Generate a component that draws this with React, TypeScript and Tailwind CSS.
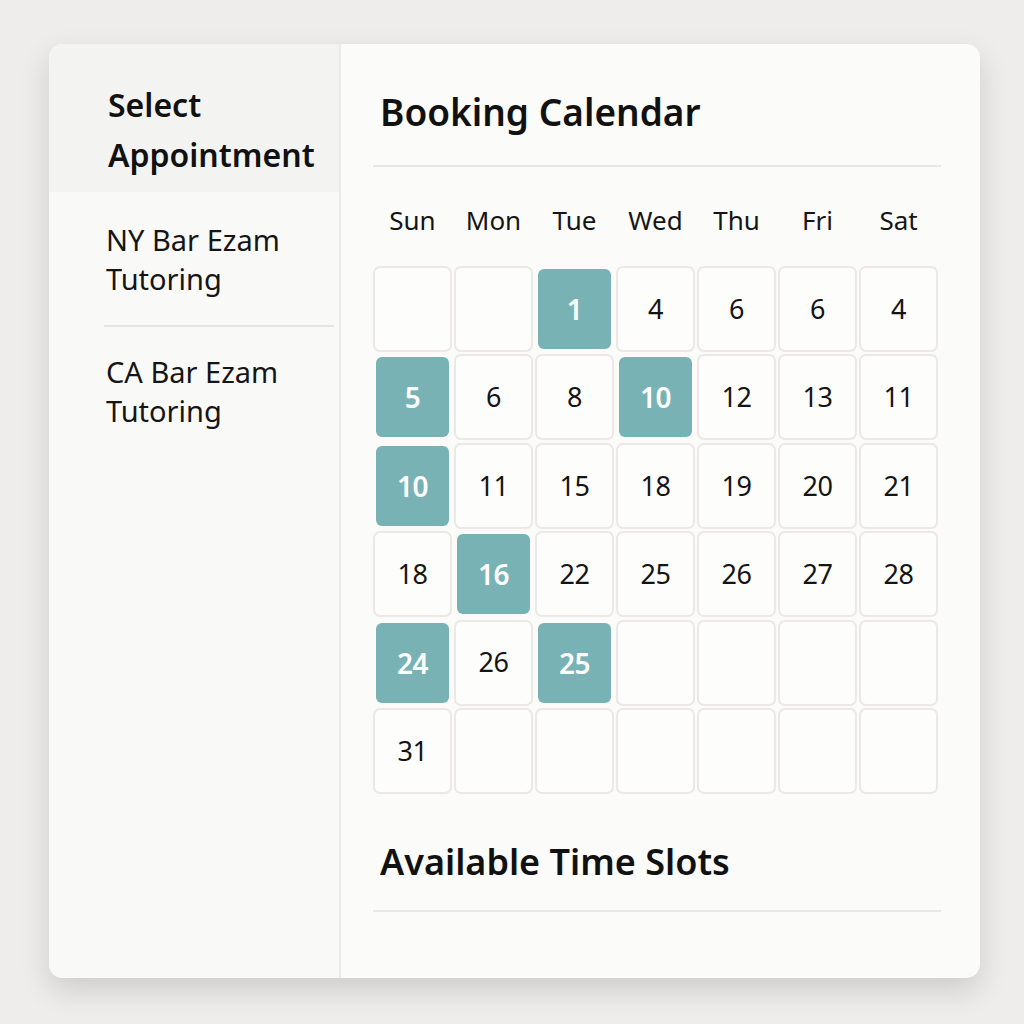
const DAYS = ['Sun', 'Mon', 'Tue', 'Wed', 'Thu', 'Fri', 'Sat']

type Cell = { n?: number; on?: boolean }

const WEEKS: Cell[][] = [
  [{}, {}, { n: 1, on: true }, { n: 4 }, { n: 6 }, { n: 6 }, { n: 4 }],
  [{ n: 5, on: true }, { n: 6 }, { n: 8 }, { n: 10, on: true }, { n: 12 }, { n: 13 }, { n: 11 }],
  [{ n: 10, on: true }, { n: 11 }, { n: 15 }, { n: 18 }, { n: 19 }, { n: 20 }, { n: 21 }],
  [{ n: 18 }, { n: 16, on: true }, { n: 22 }, { n: 25 }, { n: 26 }, { n: 27 }, { n: 28 }],
  [{ n: 24, on: true }, { n: 26 }, { n: 25, on: true }, {}, {}, {}, {}],
  [{ n: 31 }, {}, {}, {}, {}, {}, {}],
]

function DayCell({ cell }: { cell: Cell }) {
  if (cell.on) {
    return (
      <div className="h-[86px] p-[3px]">
        <div className="flex h-full items-center justify-center rounded-[6px] bg-[#78b2b5] text-[28px] font-semibold tracking-[-0.5px] text-white">
          {cell.n}
        </div>
      </div>
    )
  }
  return (
    <div className="flex h-[86px] items-center justify-center rounded-[7px] border-2 border-[#ebe8e6] bg-[#fdfdfc] text-[27px] tracking-[-0.5px] text-[#141414]">
      {cell.n ?? ''}
    </div>
  )
}

export default function App() {
  return (
    <div
      className="h-[1024px] w-[1024px] bg-[#eeedeb] pt-[44px] pl-[49px]"
      style={{ fontFamily: '"Noto Sans", Lato, sans-serif' }}
    >
      <div className="flex h-[934px] w-[931px] overflow-hidden rounded-[14px] bg-[#fbfbfa] shadow-[0_12px_30px_rgba(0,0,0,0.14)]">
        {/* Sidebar */}
        <aside className="w-[292px] shrink-0 border-r-2 border-[#ebeae8] bg-[#f9f9f8]">
          <div className="h-[148px] bg-[#f3f3f2] pt-[36px] pl-[59px] text-[32px] leading-[50px] font-semibold text-[#111]">
            Select
            <br />
            Appointment
          </div>
          <div className="pt-[28px] pl-[57px] text-[29px] leading-[39px] text-[#151515]">
            NY Bar Ezam
            <br />
            Tutoring
          </div>
          <div className="mt-[27px] mr-[5px] ml-[55px] border-t-2 border-[#e6e5e3]" />
          <div className="pt-[25px] pl-[57px] text-[29px] leading-[39px] text-[#151515]">
            CA Bar Ezam
            <br />
            Tutoring
          </div>
        </aside>

        {/* Calendar */}
        <main className="flex-1 pt-[46px] pr-[39px] pl-[32px]">
          <h1 className="pl-[7px] text-[37px] leading-[44px] font-semibold text-[#111]">Booking Calendar</h1>
          <div className="mt-[31px] border-t-2 border-[#e8e7e5]" />

          <div className="mt-[38px] grid w-[565px] grid-cols-7 gap-x-[2px] text-center text-[26px] leading-[30px] text-[#151515]">
            {DAYS.map((d) => (
              <div key={d}>{d}</div>
            ))}
          </div>

          <div className="mt-[31px] grid w-[565px] grid-cols-7 gap-x-[2px] gap-y-[2.4px]">
            {WEEKS.flat().map((c, i) => (
              <DayCell key={i} cell={c} />
            ))}
          </div>

          <h2 className="mt-[46px] pl-[7px] text-[36px] leading-[44px] font-semibold text-[#111]">
            Available Time Slots
          </h2>
          <div className="mt-[26px] border-t-2 border-[#e8e7e5]" />
        </main>
      </div>
    </div>
  )
}
